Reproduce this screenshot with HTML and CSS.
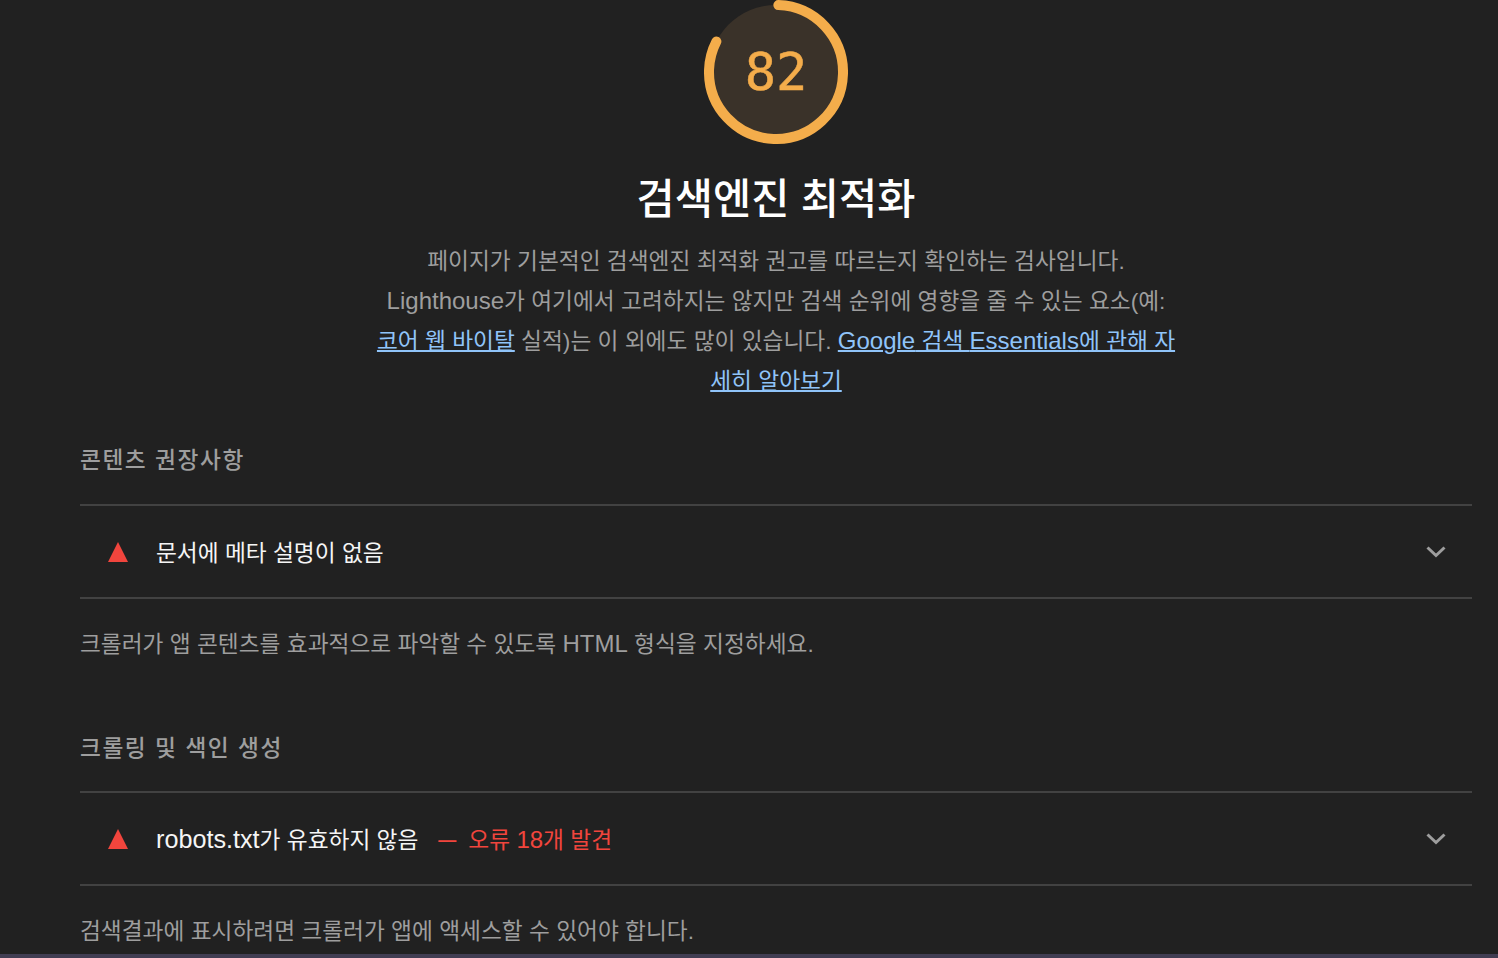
FILE: index.html
```html
<!DOCTYPE html>
<html lang="ko">
<head>
    <meta charset="UTF-8">
    <meta name="viewport" content="width=device-width, initial-scale=1.0">
    <title>검색엔진 최적화</title>
    <link rel="stylesheet" href="styles.css">
</head>
<body>
    <div class="report">
        <div class="score-head">
            <div class="gauge">
                <svg class="gauge-ring" width="144" height="144" viewBox="0 0 144 144">
                    <circle class="gauge-base" cx="72" cy="72" r="67"></circle>
                    <circle class="gauge-arc" cx="72" cy="72" r="67" pathLength="100" stroke-dasharray="82 100" transform="rotate(-88 72 72)"></circle>
                </svg>
                <span class="gauge-value">82</span>
            </div>
            <h1 class="score-title">검색엔진 최적화</h1>
            <p class="score-desc">페이지가 기본적인 검색엔진 최적화 권고를 따르는지 확인하는 검사입니다. <span class="latin">Lighthouse</span>가 여기에서 고려하지는 않지만 검색 순위에 영향을 줄 수 있는 요소(예: <a href="#">코어 웹 바이탈</a> 실적)는 이 외에도 많이 있습니다. <a href="#"><span class="latin">Google</span> 검색 <span class="latin">Essentials</span>에 관해 자세히 알아보기</a></p>
        </div>

        <section class="group">
            <h2 class="group-title">콘텐츠 권장사항</h2>
            <div class="audit">
                <svg class="audit-icon" width="20" height="20" viewBox="0 0 20 20"><polygon points="10,0 20,20 0,20"></polygon></svg>
                <span class="audit-name">문서에 메타 설명이 없음</span>
                <svg class="chevron" width="20" height="12" viewBox="0 0 20 12"><path d="M1.500 1.500 10 9.500l8.500-8"></path></svg>
            </div>
            <p class="group-desc">크롤러가 앱 콘텐츠를 효과적으로 파악할 수 있도록 <span class="latin">HTML</span> 형식을 지정하세요.</p>
        </section>

        <section class="group">
            <h2 class="group-title">크롤링 및 색인 생성</h2>
            <div class="audit">
                <svg class="audit-icon" width="20" height="20" viewBox="0 0 20 20"><polygon points="10,0 20,20 0,20"></polygon></svg>
                <span class="audit-name"><span class="latin">robots.txt</span>가 유효하지 않음</span>
                <span class="audit-note"><span class="audit-dash">—</span>오류 <span class="latin">18</span>개 발견</span>
                <svg class="chevron" width="20" height="12" viewBox="0 0 20 12"><path d="M1.500 1.500 10 9.500l8.500-8"></path></svg>
            </div>
            <p class="group-desc">검색결과에 표시하려면 크롤러가 앱에 액세스할 수 있어야 합니다.</p>
        </section>
    </div>
    <div class="bottom-strip"></div>
</body>
</html>
```

FILE: styles.css
```css
html, body {
    height: 100%;
}
body {
    display: flex;
    flex-direction: column;
    margin: 0;
    overflow: hidden;
    background-color: #212121;
    color: #f5f5f5;
    font-family: "Liberation Sans", "Noto Sans CJK KR", sans-serif;
}
.report {
    flex: 1;
    min-height: 0;
    overflow: hidden;
    padding: 0 26px 0 80px;
}
.latin {
    font-size: 24px;
    line-height: 1;
}
.score-head {
    display: flex;
    flex-direction: column;
    align-items: center;
}
.gauge {
    position: relative;
    width: 144px;
    height: 144px;
}
.gauge-ring {
    display: block;
}
.gauge-base {
    fill: #3a3229;
    stroke: none;
}
.gauge-arc {
    fill: none;
    stroke: #f4ad4b;
    stroke-width: 10;
    stroke-linecap: round;
}
.gauge-value {
    position: absolute;
    inset: 0;
    display: flex;
    align-items: center;
    justify-content: center;
    color: #f4ad4b;
    font-family: "DejaVu Sans Mono", monospace;
    font-size: 52px;
    -webkit-text-stroke: 0.5px #f4ad4b;
}
.score-title {
    margin: 30px 0 0;
    font-size: 41.500px;
    line-height: 52px;
    font-weight: 500;
    color: #fff;
}
.score-desc {
    width: 800px;
    margin: 15px 0 0;
    font-size: 22.700px;
    line-height: 40px;
    text-align: center;
    color: #9e9e9e;
}
.score-desc a {
    color: #90c4f9;
    text-decoration-thickness: 2px;
}
.group-title {
    margin: 0;
    font-size: 22.700px;
    line-height: 40px;
    font-weight: 500;
    letter-spacing: 1.550px;
    color: #9e9e9e;
}
.group:first-of-type {
    margin-top: 39px;
}
.group + .group {
    margin-top: 64px;
}
.group + .group .audit {
    margin-top: 23px;
}
.audit {
    display: flex;
    align-items: center;
    height: 91px;
    margin-top: 24px;
    padding: 0 26px 0 28px;
    border-top: 2px solid #424242;
    border-bottom: 2px solid #424242;
    font-size: 22.700px;
}
.audit-icon {
    flex: none;
    margin-right: 28px;
}
.audit-icon polygon {
    fill: #f1453d;
}
.audit-name {
    color: #f5f5f5;
}
.audit-name .latin {
    font-size: 25.200px;
}
.audit-note {
    color: #f1453d;
}
.audit-dash {
    margin: 0 12px 0 20px;
    font-size: 18px;
    font-weight: 700;
    vertical-align: 2px;
}
.chevron {
    flex: none;
    margin-left: auto;
}
.chevron path {
    fill: none;
    stroke: #9e9e9e;
    stroke-width: 3;
}
.group-desc {
    margin: 25px 0 0;
    font-size: 22.700px;
    line-height: 40px;
    color: #9e9e9e;
}
.bottom-strip {
    flex: none;
    height: 4px;
    background-color: #413d52;
}
```
